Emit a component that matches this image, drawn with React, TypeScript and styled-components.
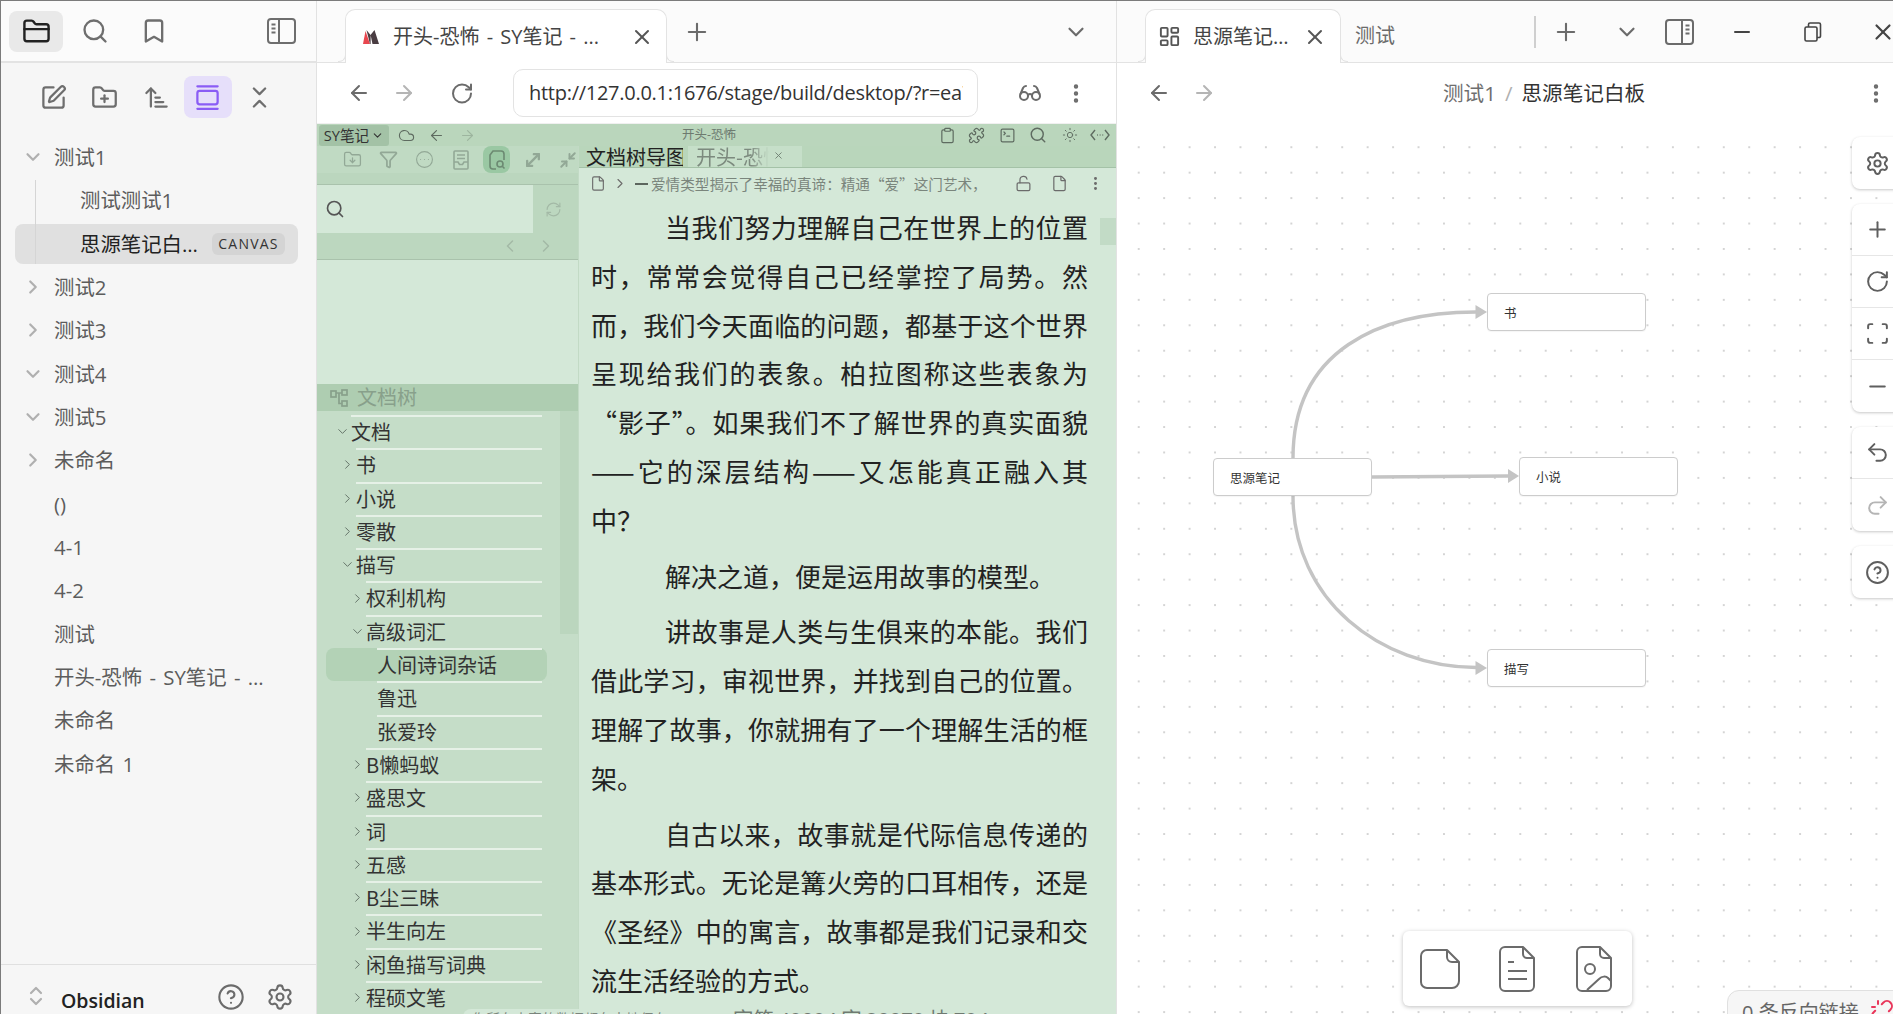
import React from "react";
import styled, { createGlobalStyle } from "styled-components";
import {
  FolderClosed, Search, Bookmark, SquarePen, FolderPlus, ArrowUpNarrowWide, GalleryVertical, ChevronsDownUp,
  ChevronsUpDown, ChevronRight, ChevronDown, ChevronLeft, CircleHelp, Settings, X, Plus, ArrowLeft, ArrowRight,
  RotateCw, Glasses, EllipsisVertical, LayoutDashboard, Minus, Scan, Undo2, Redo2, Cloud, Clipboard, Puzzle,
  SquareTerminal, Sun, FolderDown, Filter, CircleEllipsis, MoveDiagonal, Minimize2, File, LockOpen,
  RefreshCw, Unlink,
} from "lucide-react";

const sans = `"Open Sans", "Noto Sans CJK SC", sans-serif`;
const cjk = `"Noto Sans CJK SC", "Open Sans", sans-serif`;

const Global = createGlobalStyle`
  html, body { margin: 0; padding: 0; height: 100%; overflow: hidden; background: #fff; }
  #root { height: 100%; }
  * { box-sizing: border-box; }
`;

const Shell = styled.div`
  display: flex;
  height: 100vh;
  width: 100vw;
  overflow: hidden;
  border-top: 1px solid #7b7b7b;
  font-family: ${sans};
`;

/* generic icon holder: fixed width, gap from previous item, colour */
const Ico = styled.span<{ $w?: number; $ml?: number; $c?: string }>`
  display: inline-flex;
  align-items: center;
  justify-content: center;
  flex: none;
  width: ${(p) => p.$w ?? 24}px;
  margin-left: ${(p) => p.$ml ?? 0}px;
  color: ${(p) => p.$c ?? "#6b6b6b"};
`;

/* ---------- left sidebar ---------- */
const Sidebar = styled.aside`
  flex: none;
  width: 317px;
  display: flex;
  flex-direction: column;
  background: #f6f6f6;
  border-left: 1px solid #7b7b7b;
  border-right: 1px solid #e2e2e2;
`;
const SideHead = styled.div`
  height: 62px;
  flex: none;
  display: flex;
  align-items: center;
  gap: 5px;
  padding: 0 8px;
  background: #fbfbfb;
  border-bottom: 2px solid #e3e3e3;
`;
const SideTab = styled.div<{ $active?: boolean; $push?: boolean }>`
  width: 54px;
  height: 41px;
  border-radius: 8px;
  display: flex;
  align-items: center;
  justify-content: center;
  background: ${(p) => (p.$active ? "#e9e9e9" : "transparent")};
  color: ${(p) => (p.$active ? "#222" : "#6e6e6e")};
  margin-left: ${(p) => (p.$push ? "auto" : "0")};
`;
const SideTools = styled.div`
  display: flex;
  align-items: center;
  gap: 3.5px;
  padding: 13px 0 0 28px;
  flex: none;
`;
const SideTool = styled.div<{ $active?: boolean }>`
  width: 48px;
  height: 42px;
  border-radius: 8px;
  display: flex;
  align-items: center;
  justify-content: center;
  background: ${(p) => (p.$active ? "#e6dffa" : "transparent")};
  color: ${(p) => (p.$active ? "#8a5cf5" : "#6e6e6e")};
`;
const FileTree = styled.div`
  padding-top: 19px;
  flex: 1;
  min-height: 0;
`;
const Nested = styled.div`
  position: relative;
  &::before {
    content: "";
    position: absolute;
    left: 34px;
    top: 0;
    bottom: 0;
    width: 1px;
    background: #d5d5d5;
    z-index: 1;
  }
`;
const TreeRow = styled.div<{ $depth?: number; $sel?: boolean }>`
  display: flex;
  align-items: center;
  height: 40px;
  margin: 0 18px 3.35px 14px;
  padding: 0 ${(p) => (p.$sel ? 13 : 22)}px 0 ${(p) => (p.$depth ? 33 : 7)}px;
  border-radius: 8px;
  background: ${(p) => (p.$sel ? "#e0e0e0" : "transparent")};
  color: ${(p) => (p.$sel ? "#222" : "#5c5c5c")};
  font-size: 20.4px;
  line-height: 28px;
`;
const RowChevron = styled.span`
  flex: none;
  width: 22px;
  margin-right: 10px;
  display: inline-flex;
  justify-content: center;
  color: #b0b0b0;
`;
const RowText = styled.span`
  flex: 1;
  min-width: 0;
  white-space: nowrap;
  overflow: hidden;
  text-overflow: ellipsis;
  word-spacing: 2px;
`;
const Badge = styled.span`
  flex: none;
  width: 73px;
  height: 22px;
  margin-left: 12px;
  border-radius: 6px;
  background: #d4d4d4;
  color: #333;
  font-size: 14px;
  line-height: 22px;
  letter-spacing: 1.2px;
  text-align: center;
`;
const SideFoot = styled.div`
  flex: none;
  height: 50px;
  display: flex;
  align-items: flex-start;
  padding: 18px 21px 0 23px;
  border-top: 1px solid #e0e0e0;
`;
const Vault = styled.span`
  margin-left: 13px;
  flex: 1;
  font-weight: 600;
  font-size: 19.5px;
  line-height: 36px;
  color: #222;
`;

/* ---------- panes ---------- */
const Pane = styled.section<{ $w?: number }>`
  display: flex;
  flex-direction: column;
  min-width: 0;
  flex: ${(p) => (p.$w ? "none" : "1")};
  width: ${(p) => (p.$w ? `${p.$w}px` : "auto")};
  border-right: ${(p) => (p.$w ? "1px solid #e2e2e2" : "none")};
  overflow: hidden;
  background: #fff;
`;
const TabBar = styled.div`
  flex: none;
  height: 62px;
  display: flex;
  align-items: flex-end;
  padding-left: 28px;
  background: #fbfbfb;
  border-bottom: 1px solid #e3e3e3;
`;
const Tab = styled.div<{ $w: number }>`
  position: relative;
  z-index: 1;
  flex: none;
  width: ${(p) => p.$w}px;
  height: 54px;
  margin-bottom: -1px;
  display: flex;
  align-items: center;
  padding-left: 16px;
  background: #fff;
  border: 1px solid #e3e3e3;
  border-bottom: none;
  border-radius: 10px 10px 0 0;
  color: #444;
  font-size: 20px;
  &::before,
  &::after {
    content: "";
    position: absolute;
    bottom: 1px;
    width: 7px;
    height: 7px;
    border: solid #e3e3e3;
  }
  &::before {
    left: -8px;
    border-width: 0 1px 1px 0;
    border-bottom-right-radius: 7px;
  }
  &::after {
    right: -8px;
    border-width: 0 0 1px 1px;
    border-bottom-left-radius: 7px;
  }
`;
const TabText = styled.span<{ $w: number; $ml: number }>`
  flex: none;
  width: ${(p) => p.$w}px;
  margin-left: ${(p) => p.$ml}px;
  white-space: nowrap;
  overflow: hidden;
  text-overflow: ellipsis;
  line-height: 28px;
  word-spacing: 2px;
`;
const TabRow = styled.div`
  height: 61px;
  display: flex;
  align-items: center;
  flex: 1;
  min-width: 0;
`;
const PlainTab = styled.span`
  color: #6b6b6b;
  font-size: 20px;
  line-height: 28px;
  margin: 8px 0 0 14px;
  flex: none;
`;
const BarDivider = styled.span`
  flex: none;
  width: 2px;
  height: 32px;
  background: #cfcfcf;
  margin-left: 139px;
`;
const NavBar = styled.div`
  flex: none;
  height: 60px;
  display: flex;
  align-items: center;
  padding-left: 30px;
  background: #fff;
`;
const UrlBox = styled.div`
  flex: none;
  width: 465px;
  height: 48px;
  margin-left: 39px;
  padding: 0 14px 0 15px;
  display: flex;
  align-items: center;
  border: 1px solid #e3e3e3;
  border-radius: 10px;
  background: #fff;
  color: #333;
  font-size: 20px;
  letter-spacing: -0.27px;
  line-height: 28px;
  white-space: nowrap;
  overflow: hidden;
`;
const UrlText = styled.span`
  display: block;
  width: 100%;
  overflow: hidden;
`;
const Crumbs = styled.div`
  margin-left: 227px;
  display: flex;
  align-items: baseline;
  font-size: 20.6px;
  line-height: 28px;
  color: #6e6e6e;
  flex: none;
`;
const CrumbSep = styled.span`
  margin: 0 9px;
  color: #b0b0b0;
`;
const CrumbNow = styled.span`
  color: #333;
`;
const PushRight = styled.span`
  margin-left: auto;
  padding-right: 5px;
  display: inline-flex;
`;

/* ---------- embedded webview ---------- */
const WebView = styled.div`
  position: relative;
  flex: 1;
  min-height: 0;
  display: flex;
  flex-direction: column;
  background: #d4e8d8;
  border-top: 1px solid #f0f0f0;
`;
const SyBar = styled.div`
  flex: none;
  height: 22px;
  display: flex;
  align-items: center;
  background: #bad6bc;
  color: #5e6b60;
`;
const SyMenu = styled.div`
  flex: none;
  width: 70px;
  height: 21px;
  margin-left: 2px;
  border-radius: 3px;
  display: flex;
  align-items: center;
  justify-content: center;
  gap: 2px;
  background: #a3c2a6;
  color: #333;
  font-size: 14.6px;
  line-height: 21px;
`;
const SyTitle = styled.div`
  width: 70px;
  margin-left: 197px;
  flex: none;
  text-align: center;
  font-size: 12.5px;
  line-height: 20px;
  color: #6d7a6f;
`;
const Columns = styled.div`
  flex: 1;
  min-height: 0;
  display: flex;
`;
const Dock = styled.div`
  flex: none;
  width: 262px;
  display: flex;
  flex-direction: column;
  border-right: 1px solid #c2dac5;
`;
const DockTools = styled.div`
  flex: none;
  height: 27px;
  display: flex;
  align-items: center;
  padding-left: 22px;
  background: #c0dac3;
  color: #92a896;
`;
const DockTool = styled.span<{ $active?: boolean; $ml?: number }>`
  flex: none;
  width: 27px;
  height: 27px;
  margin-left: ${(p) => p.$ml ?? 9}px;
  border-radius: 8px;
  display: flex;
  align-items: center;
  justify-content: center;
  background: ${(p) => (p.$active ? "#9ac8a3" : "transparent")};
  color: ${(p) => (p.$active ? "#6c8a72" : "inherit")};
`;
const DockStrip = styled.div`
  flex: none;
  height: 12px;
  background: #bbd6be;
  border-bottom: 1px solid #a9c2ac;
`;
const SearchRow = styled.div`
  flex: none;
  height: 48px;
  display: flex;
  background: #bcd7bf;
`;
const SearchInput = styled.div`
  flex: none;
  width: 216px;
  display: flex;
  align-items: center;
  padding-left: 8px;
  background: #d4e8d8;
  color: #555;
`;
const SearchAside = styled.div`
  flex: 1;
  display: flex;
  align-items: center;
  justify-content: center;
  color: #a3b9a6;
  padding-right: 4px;
`;
const PagerRow = styled.div`
  flex: none;
  height: 27px;
  display: flex;
  align-items: center;
  padding-left: 183px;
  gap: 16px;
  background: #bcd7bf;
  border-bottom: 1px solid #a9c2ac;
  color: #a3b9a6;
`;
const DockBlank = styled.div`
  flex: none;
  height: 124px;
  background: #d4e8d8;
`;
const DockTitle = styled.div`
  flex: none;
  height: 27px;
  display: flex;
  align-items: center;
  gap: 9px;
  padding-left: 13px;
  background: #aecdb1;
  color: #88a08b;
  font-size: 20px;
  line-height: 27px;
`;
const DocTree = styled.div`
  position: relative;
  flex: 1;
  min-height: 0;
  overflow: hidden;
  padding-top: 4px;
  background: #c5ddc8;
`;
const TreeThumb = styled.div`
  position: absolute;
  top: 0;
  right: 0;
  width: 18px;
  height: 223px;
  background: #bbd6be;
`;
const DocRow = styled.div<{ $sel?: boolean }>`
  position: relative;
  display: flex;
  height: 33.3px;
  width: 221px;
  margin-left: 9px;
  border-radius: 8px;
  background: ${(p) => (p.$sel ? "#b3d2b6" : "transparent")};
`;
const DocChevron = styled.span<{ $pad: number }>`
  flex: none;
  box-sizing: content-box;
  width: 10px;
  padding-left: ${(p) => p.$pad}px;
  margin-right: 4px;
  display: flex;
  align-items: center;
  justify-content: center;
  color: #66756a;
  & svg {
    flex: none;
  }
`;
const DocLabel = styled.span`
  flex: 1;
  margin-right: 5px;
  border-top: 2px solid #e6f1e7;
  color: #333;
  font-family: ${cjk};
  font-size: 20px;
  line-height: 29px;
  white-space: nowrap;
`;
const Editor = styled.div`
  position: relative;
  flex: 1;
  min-width: 0;
  display: flex;
  flex-direction: column;
  background: #d4e8d8;
`;
const EditorTabs = styled.div`
  flex: none;
  height: 22px;
  display: flex;
  padding-left: 7px;
  background: #b9d6bb;
  border-bottom: 1px solid #a4c2a7;
  font-family: ${cjk};
  font-size: 20px;
  line-height: 21px;
  overflow: hidden;
`;
const DocTreeTab = styled.span`
  flex: none;
  width: 97px;
  overflow: hidden;
  white-space: nowrap;
  color: #222;
`;
const NoteTab = styled.span`
  flex: none;
  width: 114px;
  margin-left: 5px;
  padding-left: 8px;
  display: flex;
  align-items: flex-start;
  background: #c6dfc9;
  color: #7c8a7e;
`;
const NoteTabText = styled.span`
  flex: none;
  width: 73px;
  overflow: hidden;
  white-space: nowrap;
  -webkit-mask-image: linear-gradient(90deg, #000 75%, transparent);
  mask-image: linear-gradient(90deg, #000 75%, transparent);
`;
const NoteClose = styled.span`
  margin: 0 0 0 4px;
  display: inline-flex;
  height: 18px;
  align-items: center;
  color: #6f7f72;
`;
const Breadcrumb = styled.div`
  flex: none;
  height: 31px;
  display: flex;
  align-items: center;
  padding-left: 11px;
  color: #6f7a71;
`;
const CrumbDash = styled.span`
  flex: none;
  width: 13px;
  height: 2px;
  margin: 0 3px 0 7px;
  background: #5c665e;
`;
const CrumbText = styled.span`
  flex: none;
  width: 342px;
  font-family: ${cjk};
  font-size: 14.6px;
  line-height: 20px;
  color: #7a857c;
  white-space: nowrap;
  overflow: hidden;
`;
const Article = styled.article`
  flex: 1;
  min-height: 0;
  padding: 4px 28px 0 12px;
  overflow: hidden;
  font-family: ${cjk};
  font-size: 26px;
  line-height: 48.8px;
  color: #222;
`;
const Para = styled.p`
  margin: 0 0 7px;
  text-align: justify;
  text-indent: 74px;
`;
const EditorThumb = styled.div`
  position: absolute;
  right: 0;
  top: 72px;
  width: 16px;
  height: 27px;
  background: #c2dbc6;
`;
const StatusText = styled.div`
  position: absolute;
  left: 154px;
  bottom: -17px;
  height: 24px;
  color: #6f7a71;
  font-size: 20.5px;
  word-spacing: -1px;
  line-height: 24px;
  white-space: nowrap;
`;
const NoticePill = styled.div`
  position: absolute;
  left: 146px;
  bottom: -14px;
  width: 116px;
  height: 19px;
  border-radius: 8px 0 0 0;
  background: #d4e8d8;
`;
const NoticeText = styled.div`
  position: absolute;
  left: 155px;
  bottom: -14px;
  height: 19px;
  color: #7a857c;
  font-family: ${cjk};
  font-size: 14px;
  line-height: 19px;
  white-space: nowrap;
`;

/* ---------- canvas ---------- */
const Canvas = styled.div`
  position: relative;
  flex: 1;
  min-height: 0;
  overflow: hidden;
  background-color: #fff;
  background-image: radial-gradient(circle at center, #d4d4d4 0.8px, transparent 1.1px);
  background-size: 25.45px 25.45px;
  background-position: 9px 11.5px;
`;
const Edges = styled.svg`
  position: absolute;
  inset: 0;
  width: 100%;
  height: 100%;
`;
const Node = styled.div<{ $x: number; $y: number; $h?: number }>`
  position: absolute;
  left: ${(p) => p.$x}px;
  top: ${(p) => p.$y}px;
  width: 159px;
  height: ${(p) => p.$h ?? 38}px;
  padding-left: 16px;
  display: flex;
  align-items: center;
  background: #fff;
  border: 1.5px solid #cccccc;
  border-radius: 4px;
  box-shadow: 0 1px 1px rgba(0, 0, 0, 0.04);
  color: #333;
  font-family: ${cjk};
  font-size: 12.5px;
`;
const ControlRail = styled.div`
  position: absolute;
  left: 735px;
  top: 14px;
  display: flex;
  flex-direction: column;
  gap: 15px;
`;
const ControlGroup = styled.div`
  width: 60px;
  background: #fff;
  border-radius: 8px 0 0 8px;
  box-shadow: 0 1px 3px rgba(0, 0, 0, 0.22);
  overflow: hidden;
`;
const ControlBtn = styled.div<{ $off?: boolean }>`
  height: 52px;
  padding-left: 13px;
  display: flex;
  align-items: center;
  color: ${(p) => (p.$off ? "#b5b5b5" : "#5f5f5f")};
  border-bottom: 1px solid #e6e6e6;
  &:last-child {
    border-bottom: none;
  }
`;
const AddBar = styled.div`
  position: absolute;
  left: 286px;
  top: 808px;
  width: 229px;
  height: 75px;
  display: flex;
  align-items: center;
  padding-left: 17px;
  background: #fff;
  border-radius: 6px;
  box-shadow: 0 1px 4px rgba(0, 0, 0, 0.25);
  color: #5f5f5f;
`;
const Backlinks = styled.div`
  position: absolute;
  left: 610px;
  top: 867px;
  width: 190px;
  height: 60px;
  display: flex;
  align-items: flex-start;
  padding: 8px 0 0 14px;
  background: #f6f6f6;
  border: 1px solid #e0e0e0;
  border-radius: 12px 0 0 0;
  color: #666;
  font-size: 20px;
  line-height: 28px;
  white-space: nowrap;
`;
const BackIcon = styled.span`
  margin-left: 11px;
  display: inline-flex;
  color: #e9365a;
`;

/* ---------- drawn icons ---------- */
const PanelIcon = ({ flip }: { flip?: boolean }) => (
  <svg width="29" height="26" viewBox="0 0 29 26" fill="none" stroke="currentColor" strokeWidth="2">
    <g transform={flip ? "matrix(-1 0 0 1 29 0)" : undefined}>
      <rect x="1" y="1" width="27" height="24" rx="3" />
      <path d="M12 1v24" />
      <path d="M4.500 6.500h4M4.500 10.500h4M4.500 14.500h4" />
    </g>
  </svg>
);
const Favicon = () => (
  <svg width="18" height="16" viewBox="0 0 18 16">
    <path d="M1 15 3.500 2 8 15z" fill="#e8474f" />
    <path d="M8 15 4.500 1 8.500 6 12.500 1 17 15z" fill="#4a3d42" />
    <path d="M8.600 15 8.600 6 10.500 15z" fill="#fff" />
  </svg>
);
const RestoreIcon = () => (
  <svg width="20" height="20" viewBox="0 0 20 20" fill="none" stroke="currentColor" strokeWidth="1.6">
    <rect x="2" y="5" width="12" height="14" rx="1.500" />
    <path d="M5.500 5V2.500A1.500 1.500 0 0 1 7 1h9a1.500 1.500 0 0 1 1.500 1.500V14A1.500 1.500 0 0 1 16 15.500h-2" />
  </svg>
);
const CodeDots = () => (
  <svg width="20" height="14" viewBox="0 0 20 14" fill="none" stroke="currentColor" strokeWidth="1.4">
    <path d="M5 2 1 7l4 5M15 2l4 5-4 5" />
    <path d="M7 7h.8M9.700 7h.8M12.400 7h.8" />
  </svg>
);
const DocSearchIcon = () => (
  <svg width="20" height="20" viewBox="0 0 20 20" fill="none" stroke="currentColor" strokeWidth="1.6">
    <path d="M9 19H6a3 3 0 0 1-3-3V5l3-4h8a3 3 0 0 1 3 3v6" />
    <circle cx="13" cy="14" r="3" />
    <path d="m15.500 16.500 2 2" />
  </svg>
);
const TrayDocIcon = () => (
  <svg width="16" height="20" viewBox="0 0 16 20" fill="none" stroke="currentColor" strokeWidth="1.6">
    <rect x="1" y="1" width="14" height="18" rx="1" />
    <path d="M4 5h8M4 8.500h8" />
    <path d="M1 12h4l1.500 2.500h3L11 12h4" />
  </svg>
);
const DocTreeIcon = () => (
  <svg width="18" height="18" viewBox="0 0 18 18" fill="none" stroke="currentColor" strokeWidth="1.700">
    <rect x="1" y="2" width="5" height="6" />
    <rect x="12" y="1" width="5" height="5" />
    <rect x="12" y="12" width="5" height="5" />
    <path d="M6 4h6M9 4v10.500h3" />
  </svg>
);
const BlankSheet = () => (
  <svg width="40" height="40" viewBox="0 0 40 40" fill="none" stroke="currentColor" strokeWidth="2" strokeLinejoin="round">
    <path d="M7 1h20l12 12v19a7 7 0 0 1-7 7H7a6 6 0 0 1-6-6V7a6 6 0 0 1 6-6z" />
    <path d="M27 1v7a5 5 0 0 0 5 5h7" />
  </svg>
);
const NoteSheet = () => (
  <svg width="36" height="46" viewBox="0 0 36 46" fill="none" stroke="currentColor" strokeWidth="2" strokeLinejoin="round">
    <path d="M6 1h18l11 11v28a5 5 0 0 1-5 5H6a5 5 0 0 1-5-5V6a5 5 0 0 1 5-5z" />
    <path d="M24 1v7a4 4 0 0 0 4 4h7" />
    <path d="M9 16h6M9 25h19M9 33h19" />
  </svg>
);
const ImageSheet = () => (
  <svg width="36" height="46" viewBox="0 0 36 46" fill="none" stroke="currentColor" strokeWidth="2" strokeLinejoin="round">
    <path d="M6 1h18l11 11v28a5 5 0 0 1-5 5H6a5 5 0 0 1-5-5V6a5 5 0 0 1 5-5z" />
    <path d="M24 1v7a4 4 0 0 0 4 4h7" />
    <circle cx="14" cy="23" r="5" />
    <path d="m11 44 12-11c3-3 7-3 9-1l3 3" />
  </svg>
);

/* ---------- data ---------- */
const sideRows: { t: string; c?: "d" | "r" }[] = [
  { t: "测试2", c: "r" },
  { t: "测试3", c: "r" },
  { t: "测试4", c: "d" },
  { t: "测试5", c: "d" },
  { t: "未命名", c: "r" },
  { t: "()" },
  { t: "4-1" },
  { t: "4-2" },
  { t: "测试" },
  { t: "开头-恐怖 - SY笔记 - 思源笔记" },
  { t: "未命名" },
  { t: "未命名 1" },
];

const docRows: { t: string; d: number; c?: "d" | "r"; sel?: boolean }[] = [
  { t: "文档", d: 0, c: "d" },
  { t: "书", d: 1, c: "r" },
  { t: "小说", d: 1, c: "r" },
  { t: "零散", d: 1, c: "r" },
  { t: "描写", d: 1, c: "d" },
  { t: "权利机构", d: 2, c: "r" },
  { t: "高级词汇", d: 2, c: "d" },
  { t: "人间诗词杂话", d: 3, sel: true },
  { t: "鲁迅", d: 3 },
  { t: "张爱玲", d: 3 },
  { t: "B懒蚂蚁", d: 2, c: "r" },
  { t: "盛思文", d: 2, c: "r" },
  { t: "词", d: 2, c: "r" },
  { t: "五感", d: 2, c: "r" },
  { t: "B尘三昧", d: 2, c: "r" },
  { t: "半生向左", d: 2, c: "r" },
  { t: "闲鱼描写词典", d: 2, c: "r" },
  { t: "程硕文笔", d: 2, c: "r" },
];
const docPad = [11, 16, 26, 37];

const SideRow = ({ t, c, depth, sel, badge }: { t: string; c?: "d" | "r"; depth?: number; sel?: boolean; badge?: string }) => (
  <TreeRow $depth={depth} $sel={sel}>
    <RowChevron>
      {c === "d" && <ChevronDown size={22} strokeWidth={2.4} />}
      {c === "r" && <ChevronRight size={22} strokeWidth={2.4} />}
    </RowChevron>
    <RowText>{t}</RowText>
    {badge && <Badge>{badge}</Badge>}
  </TreeRow>
);

export default function App() {
  return (
    <>
      <Global />
      <Shell>
        <Sidebar>
          <SideHead>
            <SideTab $active><FolderClosed size={29} strokeWidth={2} /></SideTab>
            <SideTab><Search size={28} strokeWidth={2} /></SideTab>
            <SideTab><Bookmark size={28} strokeWidth={2} /></SideTab>
            <SideTab $push><PanelIcon /></SideTab>
          </SideHead>
          <SideTools>
            <SideTool><SquarePen size={27} strokeWidth={2} /></SideTool>
            <SideTool><FolderPlus size={27} strokeWidth={2} /></SideTool>
            <SideTool><ArrowUpNarrowWide size={27} strokeWidth={2} /></SideTool>
            <SideTool $active><GalleryVertical size={27} strokeWidth={2} /></SideTool>
            <SideTool><ChevronsDownUp size={27} strokeWidth={2} /></SideTool>
          </SideTools>
          <FileTree>
            <SideRow t="测试1" c="d" />
            <Nested>
              <SideRow t="测试测试1" depth={1} />
              <SideRow t="思源笔记白板" depth={1} sel badge="CANVAS" />
            </Nested>
            {sideRows.map((r, i) => (
              <SideRow key={i} t={r.t} c={r.c} />
            ))}
          </FileTree>
          <SideFoot>
            <Ico $w={24} $c="#b0b0b0"><ChevronsUpDown size={26} strokeWidth={2.2} /></Ico>
            <Vault>Obsidian</Vault>
            <Ico $w={30}><CircleHelp size={28} strokeWidth={1.8} /></Ico>
            <Ico $w={30} $ml={19}><Settings size={28} strokeWidth={1.8} /></Ico>
          </SideFoot>
        </Sidebar>

        <Pane $w={800}>
          <TabBar>
            <Tab $w={322}>
              <Ico $w={18} $ml={0}><Favicon /></Ico>
              <TabText $w={212} $ml={13}>开头-恐怖 - SY笔记 - ...</TabText>
              <Ico $w={24} $ml={25} $c="#555"><X size={26} strokeWidth={2} /></Ico>
            </Tab>
            <TabRow>
              <Ico $w={28} $ml={16}><Plus size={28} strokeWidth={1.8} /></Ico>
              <Ico $w={28} $ml={351}><ChevronDown size={26} strokeWidth={2} /></Ico>
            </TabRow>
          </TabBar>
          <NavBar>
            <Ico><ArrowLeft size={24} strokeWidth={2} /></Ico>
            <Ico $ml={21} $c="#b5b5b5"><ArrowRight size={24} strokeWidth={2} /></Ico>
            <Ico $ml={34}><RotateCw size={25} strokeWidth={2} /></Ico>
            <UrlBox><UrlText>http://127.0.0.1:1676/stage/build/desktop/?r=ea7dk2</UrlText></UrlBox>
            <Ico $ml={40}><Glasses size={26} strokeWidth={2} /></Ico>
            <Ico $ml={22}><EllipsisVertical size={25} strokeWidth={2.4} /></Ico>
          </NavBar>
          <WebView>
            <SyBar>
              <SyMenu>SY笔记<ChevronDown size={13} strokeWidth={2} /></SyMenu>
              <Ico $w={20} $ml={7} $c="#5e6b60"><Cloud size={17} strokeWidth={1.6} /></Ico>
              <Ico $w={20} $ml={10} $c="#5e6b60"><ArrowLeft size={17} strokeWidth={1.6} /></Ico>
              <Ico $w={20} $ml={11} $c="#9db59f"><ArrowRight size={17} strokeWidth={1.6} /></Ico>
              <SyTitle>开头-恐怖</SyTitle>
              <Ico $w={20} $ml={193} $c="#5e6b60"><Clipboard size={17} strokeWidth={1.7} /></Ico>
              <Ico $w={20} $ml={9} $c="#5e6b60"><Puzzle size={17} strokeWidth={1.7} /></Ico>
              <Ico $w={20} $ml={11} $c="#5e6b60"><SquareTerminal size={17} strokeWidth={1.7} /></Ico>
              <Ico $w={20} $ml={11} $c="#5e6b60"><Search size={18} strokeWidth={1.9} /></Ico>
              <Ico $w={20} $ml={12} $c="#5e6b60"><Sun size={16} strokeWidth={1.4} /></Ico>
              <Ico $w={20} $ml={10} $c="#5e6b60"><CodeDots /></Ico>
            </SyBar>
            <Columns>
              <Dock>
                <DockTools>
                  <DockTool $ml={0}><FolderDown size={19} strokeWidth={1.6} /></DockTool>
                  <DockTool><Filter size={19} strokeWidth={2.2} /></DockTool>
                  <DockTool><CircleEllipsis size={19} strokeWidth={1.4} /></DockTool>
                  <DockTool><TrayDocIcon /></DockTool>
                  <DockTool $active><DocSearchIcon /></DockTool>
                  <DockTool><MoveDiagonal size={20} strokeWidth={2.8} /></DockTool>
                  <DockTool $ml={8}><Minimize2 size={18} strokeWidth={2.6} /></DockTool>
                </DockTools>
                <DockStrip />
                <SearchRow>
                  <SearchInput><Search size={20} strokeWidth={2} /></SearchInput>
                  <SearchAside><RefreshCw size={17} strokeWidth={1.6} /></SearchAside>
                </SearchRow>
                <PagerRow>
                  <ChevronLeft size={20} strokeWidth={1.8} />
                  <ChevronRight size={20} strokeWidth={1.8} />
                </PagerRow>
                <DockBlank />
                <DockTitle><DocTreeIcon />文档树</DockTitle>
                <DocTree>
                  <TreeThumb />
                  {docRows.map((r) => (
                    <DocRow key={r.t} $sel={r.sel}>
                      <DocChevron $pad={docPad[r.d]}>
                        {r.c === "d" && <ChevronDown size={15} strokeWidth={1.6} />}
                        {r.c === "r" && <ChevronRight size={15} strokeWidth={1.6} />}
                      </DocChevron>
                      <DocLabel>{r.t}</DocLabel>
                    </DocRow>
                  ))}
                </DocTree>
              </Dock>
              <Editor>
                <EditorTabs>
                  <DocTreeTab>文档树导图</DocTreeTab>
                  <NoteTab>
                    <NoteTabText>开头-恐怖</NoteTabText>
                    <NoteClose><X size={11} strokeWidth={2} /></NoteClose>
                  </NoteTab>
                </EditorTabs>
                <Breadcrumb>
                  <Ico $w={16}><File size={17} strokeWidth={1.7} /></Ico>
                  <Ico $w={16} $ml={6}><ChevronRight size={17} strokeWidth={1.7} /></Ico>
                  <CrumbDash />
                  <CrumbText>爱情类型揭示了幸福的真谛：精通“爱”这门艺术，</CrumbText>
                  <Ico $w={20} $ml={20}><LockOpen size={17} strokeWidth={1.7} /></Ico>
                  <Ico $w={20} $ml={16}><File size={17} strokeWidth={1.7} /></Ico>
                  <Ico $w={20} $ml={16}><EllipsisVertical size={17} strokeWidth={2.2} /></Ico>
                </Breadcrumb>
                <Article>
                  <Para>当我们努力理解自己在世界上的位置时，常常会觉得自己已经掌控了局势。然而，我们今天面临的问题，都基于这个世界呈现给我们的表象。柏拉图称这些表象为<wbr />“影子”。如果我们不了解世界的真实面貌——它的深层结构——又怎能真正融入其中？</Para>
                  <Para>解决之道，便是运用故事的模型。</Para>
                  <Para>讲故事是人类与生俱来的本能。我们借此学习，审视世界，并找到自己的位置。理解了故事，你就拥有了一个理解生活的框架。</Para>
                  <Para>自古以来，故事就是代际信息传递的基本形式。无论是篝火旁的口耳相传，还是《圣经》中的寓言，故事都是我们记录和交流生活经验的方式。</Para>
                </Article>
                <EditorThumb />
                <StatusText>字符 49094 字 20079 块 794</StatusText>
              </Editor>
            </Columns>
            <NoticePill />
            <NoticeText>你所有内容的数据都在本地保存</NoticeText>
          </WebView>
        </Pane>

        <Pane>
          <TabBar>
            <Tab $w={196}>
              <Ico $w={24} $ml={-5} $c="#555"><LayoutDashboard size={23} strokeWidth={2} /></Ico>
              <TabText $w={97} $ml={12}>思源笔记白板</TabText>
              <Ico $w={24} $ml={13} $c="#555"><X size={26} strokeWidth={2} /></Ico>
            </Tab>
            <TabRow>
              <PlainTab>测试</PlainTab>
              <BarDivider />
              <Ico $w={30} $ml={15}><Plus size={28} strokeWidth={1.8} /></Ico>
              <Ico $w={30} $ml={31}><ChevronDown size={26} strokeWidth={2} /></Ico>
              <Ico $w={30} $ml={22}><PanelIcon flip /></Ico>
              <Ico $w={30} $ml={33} $c="#444"><Minus size={24} strokeWidth={2} /></Ico>
              <Ico $w={30} $ml={41} $c="#444"><RestoreIcon /></Ico>
              <Ico $w={30} $ml={40} $c="#444"><X size={26} strokeWidth={2} /></Ico>
            </TabRow>
          </TabBar>
          <NavBar>
            <Ico><ArrowLeft size={24} strokeWidth={2} /></Ico>
            <Ico $ml={21} $c="#b5b5b5"><ArrowRight size={24} strokeWidth={2} /></Ico>
            <Crumbs>
              测试1<CrumbSep>/</CrumbSep><CrumbNow>思源笔记白板</CrumbNow>
            </Crumbs>
            <PushRight><Ico><EllipsisVertical size={25} strokeWidth={2.4} /></Ico></PushRight>
          </NavBar>
          <Canvas>
            <Edges>
              <g fill="none" stroke="#c4c4c4" strokeWidth="3.4">
                <path d="M176 335C176 227 263 189 359 189" />
                <path d="M176 373C176 477 263 544 359 544.500" />
                <path d="M255 354L391 353" />
              </g>
              <g fill="#c4c4c4">
                <path d="M370 189 358.500 182V196z" />
                <path d="M370 545 358.500 538V552z" />
                <path d="M402 353 391 346V360z" />
              </g>
            </Edges>
            <Node $x={96} $y={335}>思源笔记</Node>
            <Node $x={370} $y={170}>书</Node>
            <Node $x={402} $y={334} $h={39}>小说</Node>
            <Node $x={370} $y={526}>描写</Node>
            <ControlRail>
              <ControlGroup>
                <ControlBtn><Settings size={25} strokeWidth={1.9} /></ControlBtn>
              </ControlGroup>
              <ControlGroup>
                <ControlBtn><Plus size={25} strokeWidth={1.9} /></ControlBtn>
                <ControlBtn><RotateCw size={25} strokeWidth={1.9} /></ControlBtn>
                <ControlBtn><Scan size={25} strokeWidth={1.9} /></ControlBtn>
                <ControlBtn><Minus size={25} strokeWidth={1.9} /></ControlBtn>
              </ControlGroup>
              <ControlGroup>
                <ControlBtn><Undo2 size={25} strokeWidth={1.9} /></ControlBtn>
                <ControlBtn $off><Redo2 size={25} strokeWidth={1.9} /></ControlBtn>
              </ControlGroup>
              <ControlGroup>
                <ControlBtn><CircleHelp size={25} strokeWidth={1.9} /></ControlBtn>
              </ControlGroup>
            </ControlRail>
            <AddBar>
              <Ico $w={40}><BlankSheet /></Ico>
              <Ico $w={36} $ml={39}><NoteSheet /></Ico>
              <Ico $w={36} $ml={41}><ImageSheet /></Ico>
            </AddBar>
            <Backlinks>
              0 条反向链接
              <BackIcon><Unlink size={24} strokeWidth={2} /></BackIcon>
            </Backlinks>
          </Canvas>
        </Pane>
      </Shell>
    </>
  );
}
